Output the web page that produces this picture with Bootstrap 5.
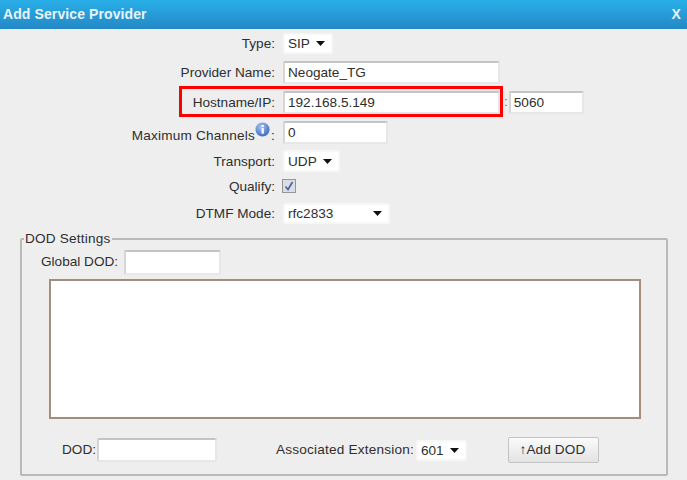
<!DOCTYPE html>
<html lang="en">
<head>
<meta charset="utf-8">
<title>Add Service Provider</title>
<link href="https://cdn.jsdelivr.net/npm/bootstrap@5.3.0/dist/css/bootstrap.min.css" rel="stylesheet">
<style>
html,body{height:480px;overflow:hidden}
body{background:#eee;font-family:"Liberation Sans",Arial,sans-serif;font-size:13.6px;color:#2e2e2e;line-height:1.2}
.dlg-head{height:29px;background:linear-gradient(#29afe8,#2488c6);color:#e8f4fb;font-weight:700;font-size:14px;letter-spacing:.1px;padding:0 6px 0 3px}
.dlg-close{font-size:14px}
.dlg-form{padding-top:4px}
.frow{height:23px;margin-bottom:7px;position:relative}
.r21{height:21px}.r22{height:22px;}.r14{height:14px}
.mb6{margin-bottom:6px}.mb10{margin-bottom:10px}
.flabel{width:276px;text-align:right;padding:2px 1px 0 0;flex:none}
.wide-txt{letter-spacing:.2px}
.ctl{height:23px;background:#fff;border:2px solid #e7e7ea;border-top-color:#c4c4c4;border-left-color:#d6d6d6;border-radius:2px;padding:0 0 0 3px;font:13.6px "Liberation Sans",Arial,sans-serif;color:#2e2e2e;margin-left:7px;outline:0;display:block;flex:none}
.sel{appearance:none;-webkit-appearance:none;height:21px;border:2px solid #f7f7f7;padding-left:3px;background:#fff url("data:image/svg+xml,%3Csvg xmlns='http://www.w3.org/2000/svg' width='9' height='5'%3E%3Cpath d='M0 0h9L4.5 5z' fill='%23111'/%3E%3C/svg%3E") no-repeat right 6px center}
.r22 .sel{height:22px}
.info{display:inline-block;width:15px;height:15px;vertical-align:3px;margin-right:1px}
.chk{width:14px;height:14px;background:#d9dde5;border:1px solid #969696;margin-left:6px;display:block;flex:none}
.redbox{position:absolute;left:179px;top:-5px;width:324px;height:31px;border:3px solid #f00;pointer-events:none}
.dodset{border:2px solid #b9b9b9;border-radius:2px;width:648px;height:245px;margin:7px 0 0 20px;padding:0;position:relative;min-width:0}
.dodset legend{float:none;width:auto;font-size:13.6px;letter-spacing:.2px;line-height:16px;margin:0 0 0 2px;padding:0 1px}
.gdod{height:25px;padding-left:19px;margin-top:3px}
.gdod .ctl{margin-left:6px;width:97px;height:25px}
.dodbox{height:140px;width:592px;background:#fff;border:2px solid #a48d7c;margin:4px 0 0 27px}
.dodfoot{margin-top:18px;height:26px;padding-left:40px}
.dodfoot .ctl{margin-left:1px;width:120px;height:24px}
.dodfoot .sel{margin-left:2px;width:51px;height:21px}
.assoc{margin-left:59px}
.add-btn{margin-left:41px;width:91px;height:26px;padding:0 2px 0 0;font-size:13.6px;letter-spacing:.1px;color:#2e2e2e;border:1px solid #c3c3c3;border-radius:2px;background:linear-gradient(#fafafa,#e3e3e3);line-height:1}
</style>
</head>
<body>
<div class="dlg-head d-flex align-items-center justify-content-between">
  <span>Add Service Provider</span><span class="dlg-close">X</span>
</div>
<form class="dlg-form">
  <div class="frow r21 d-flex align-items-center">
    <div class="flabel">Type:</div>
    <select class="ctl sel" style="width:50px"><option>SIP</option></select>
  </div>
  <div class="frow d-flex align-items-center">
    <div class="flabel">Provider Name:</div>
    <input class="ctl" style="width:217px" value="Neogate_TG">
  </div>
  <div class="frow d-flex align-items-center">
    <div class="flabel">Hostname/IP:</div>
    <input class="ctl" style="width:217px" value="192.168.5.149">
    <span class="ms-1 text-secondary">:</span>
    <input class="ctl" style="width:75px;margin-left:1px" value="5060">
    <div class="redbox"></div>
  </div>
  <div class="frow mb6 d-flex align-items-center">
    <div class="flabel wide-txt">Maximum Channels<svg class="info" viewBox="0 0 16 16"><defs><radialGradient id="g" cx=".4" cy=".3" r=".8"><stop offset="0" stop-color="#a9c4f0"/><stop offset="1" stop-color="#2f5fc0"/></radialGradient></defs><circle cx="8" cy="8" r="7.5" fill="url(#g)"/><rect x="7" y="6.5" width="2.4" height="6" fill="#fff"/><rect x="7" y="3.2" width="2.4" height="2.2" fill="#fff"/></svg>:</div>
    <input class="ctl" style="width:105px" value="0">
  </div>
  <div class="frow r22 d-flex align-items-center">
    <div class="flabel">Transport:</div>
    <select class="ctl sel" style="width:57px"><option>UDP</option></select>
  </div>
  <div class="frow r14 mb10 d-flex align-items-center">
    <div class="flabel">Qualify:</div>
    <span class="chk"><svg class="d-block" width="12" height="12" viewBox="0 0 12 12"><path d="M2.5 6.5 5 9.5 9.5 2" fill="none" stroke="#4a5f9e" stroke-width="1.6"/></svg></span>
  </div>
  <div class="frow r21 d-flex align-items-center">
    <div class="flabel">DTMF Mode:</div>
    <select class="ctl sel" style="width:107px"><option>rfc2833</option></select>
  </div>
  <fieldset class="dodset">
    <legend>DOD Settings</legend>
    <div class="gdod d-flex align-items-center">
      <span>Global DOD:</span><input class="ctl">
    </div>
    <div class="dodbox"></div>
    <div class="dodfoot d-flex align-items-center">
      <span>DOD:</span><input class="ctl">
      <span class="assoc wide-txt">Associated Extension:</span>
      <select class="ctl sel"><option>601</option></select>
      <button type="button" class="add-btn">↑Add DOD</button>
    </div>
  </fieldset>
</form>
</body>
</html>
